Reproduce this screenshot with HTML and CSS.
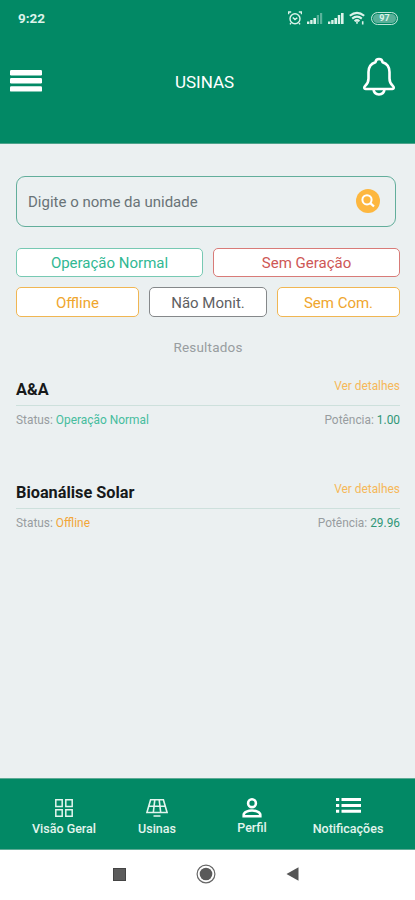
FILE: index.html
```html
<!DOCTYPE html>
<html lang="pt-BR">
<head>
<meta charset="utf-8">
<meta name="viewport" content="width=device-width, initial-scale=1">
<title>Usinas</title>
<link rel="stylesheet" href="styles.css">
</head>
<body>
<div class="app">
  <header class="header">
    <div class="statusbar">
      <span class="clock">9:22</span>
      <div class="indicators">
        <svg width="14" height="14" viewBox="0 0 14 14" fill="none" stroke="currentColor" stroke-width="1.4"><circle cx="7" cy="7.8" r="5"/><path d="M.6 3.2V1h2.6M13.4 3.2V1h-2.6M4.8 6.5 7 8.6l2.3-1.8M3 12l-1 1.4M11 12l1 1.4"/></svg>
        <svg class="sig1" width="16" height="12" viewBox="0 0 16 12" fill="currentColor"><path d="M0 9.5h2.4V12H0zM3.2 8h2.4v4H3.2zM6.4 6H9v6H6.400z"/><path opacity=".4" d="M9.8 3H12v9H9.800zM13 1h2.2v11H13z"/></svg>
        <svg class="sig2" width="16" height="12" viewBox="0 0 16 12" fill="currentColor"><path d="M0 9.5h2.4V12H0zM3.2 8h2.4v4H3.2zM6.4 6H9v6H6.400zM9.8 3h2.400v9H9.800zM13 1h2.6v11H13z"/></svg>
        <svg class="wifi" width="17" height="14" viewBox="0 0 17 14" fill="none" stroke="currentColor" stroke-width="2.100"><path d="M.8 4.8q7.2-6 14.4 0M3.2 7.6q4.8-4 9.6 0M5.6 10.2q2.4-2 4.8 0"/><path d="M8 10.2v2.6M13.7 10.2v3.3" stroke-width="1.6"/></svg>
        <span class="battery">97</span>
      </div>
    </div>
    <div class="toolbar">
      <svg class="menu" width="32" height="22" viewBox="0 0 32 22" fill="currentColor"><rect width="32" height="5.4" rx="1.2"/><rect y="8.1" width="32" height="5.4" rx="1.2"/><rect y="16.2" width="32" height="5.4" rx="1.2"/></svg>
      <h1>USINAS</h1>
      <svg class="bell" width="34" height="40" viewBox="0 0 34 40" fill="none" stroke="currentColor" stroke-width="2.6" stroke-linejoin="round"><path d="M17 2c-2.2 0-3.3 1.2-3.5 3.2C8.7 6.7 6.5 10.3 6.5 15v6.5c0 3.6-1 5.4-3.2 7.3-1.3 1.1-1.6 3.200.5 3.200h26.400c2.100 0 1.800-2.100.5-3.200-2.200-1.900-3.200-3.700-3.200-7.300V15c0-4.700-2.200-8.300-7-9.800C20.300 3.200 19.200 2 17 2z"/><path d="M11.500 32.200c.3 3.500 2.700 5.300 5.500 5.300s5.200-1.800 5.500-5.300"/></svg>
    </div>
  </header>

  <main class="content">
    <div class="search">
      <span class="placeholder">Digite o nome da unidade</span>
      <svg width="24" height="24" viewBox="0 0 24 24" fill="none"><circle cx="12" cy="12" r="12" fill="#fdb73f"/><circle cx="11" cy="10.800" r="4.600" stroke="#fff" stroke-width="2"/><path d="m14.300 14.100 3.700 3.400" stroke="#fff" stroke-width="2.300"/></svg>
    </div>
    <div class="filters two">
      <button class="chip green"><span>Operação Normal</span></button>
      <button class="chip red"><span>Sem Geração</span></button>
    </div>
    <div class="filters three">
      <button class="chip orange"><span>Offline</span></button>
      <button class="chip gray"><span>Não Monit.</span></button>
      <button class="chip orange"><span>Sem Com.</span></button>
    </div>
    <p class="results">Resultados</p>

    <article class="plant">
      <div class="row top"><h2>A&amp;A</h2><a>Ver detalhes</a></div>
      <div class="row info"><span>Status: <b class="ok">Operação Normal</b></span><span>Potência: <b class="power">1.00</b></span></div>
    </article>
    <article class="plant">
      <div class="row top"><h2>Bioanálise Solar</h2><a>Ver detalhes</a></div>
      <div class="row info"><span>Status: <b class="off">Offline</b></span><span>Potência: <b class="power">29.96</b></span></div>
    </article>
  </main>

  <nav class="tabs">
    <div class="tab">
      <svg width="18" height="18" viewBox="0 0 18 18" fill="none" stroke="currentColor" stroke-width="1.500"><path d="M.8.8h6.400v6.600H.8zM10.800.8h6.400v6.600h-6.400zM.8 10.700h6.400v6.500H.8zM10.800 10.700h6.400v6.500h-6.400z"/></svg>
      <span>Visão Geral</span>
    </div>
    <div class="tab">
      <svg width="22" height="18" viewBox="0 0 22 18" fill="none" stroke="currentColor" stroke-width="1.600"><path d="M4.600.8h12.800l3.700 12.700H.9zM2.900 7.300h16.200M8.800.8 7.300 13.500M13.200.8l1.500 12.700M7.500 17h7"/></svg>
      <span>Usinas</span>
    </div>
    <div class="tab profile">
      <svg width="20" height="20" viewBox="0 0 20 20" fill="none" stroke="currentColor" stroke-width="2.600"><circle cx="10" cy="5.200" r="3.900"/><path d="M1.700 18.300v-1.500c0-2.800 4.800-4.300 8.300-4.300s8.300 1.500 8.300 4.300v1.500z"/></svg>
      <span>Perfil</span>
    </div>
    <div class="tab notices">
      <svg width="25" height="15" viewBox="0 0 25 15" fill="currentColor"><path d="M0 0h3.200v3H0zM5.500 0H25v3H5.500zM0 5.900h3.200v3H0zM5.500 5.900H25v3H5.500zM0 11.800h3.200v3H0zM5.500 11.800H25v3H5.500z"/></svg>
      <span>Notificações</span>
    </div>
  </nav>
  <footer class="system">
    <svg width="13" height="13" viewBox="0 0 13 13"><rect x=".5" y=".5" width="12" height="12" fill="#5c5c5c" stroke="#444"/></svg>
    <svg width="20" height="20" viewBox="0 0 20 20"><circle cx="10" cy="10" r="8.900" fill="none" stroke="#666" stroke-width="1.200"/><circle cx="10" cy="10" r="6.300" fill="#5a5a5a"/></svg>
    <svg width="13" height="14" viewBox="0 0 13 14"><path d="M12.500.3v13.400L.5 7z" fill="#555"/></svg>
  </footer>
</div>
</body>
</html>
```
FILE: styles.css
```css
* { box-sizing: border-box; }
body {
  margin: 0;
  font-family: Roboto, "Liberation Sans", sans-serif;
  background: #ebf0f1;
}
h1, h2, p { margin: 0; }
svg { display: block; flex: none; }
.app { width: 415px; height: 900px; display: flex; flex-direction: column; overflow: hidden; }

.header { height: 144px; background: #028965; color: #fff; flex: none; border-bottom: 1px solid #4da38b; }
.statusbar { height: 36px; padding: 0 17px 0 18px; display: flex; align-items: center; justify-content: space-between; color: #dcf3ea; }
.clock { font-size: 13.5px; font-weight: 700; }
.indicators { display: flex; align-items: center; }
.sig1, .sig2, .wifi { margin-left: 5px; }
.battery {
  margin-left: 5px; width: 27px; height: 13px; border: 1.5px solid #bfe5d8; border-radius: 7px;
  background: #58af98; box-shadow: inset 0 0 0 1px #028965;
  font-size: 9px; line-height: 10px; font-weight: 700; text-align: center;
}
.toolbar { height: 90px; padding: 0 19px 0 10px; display: grid; grid-template-columns: 120px 1fr 120px; align-items: center; }
.toolbar h1 { font-size: 17px; font-weight: 400; text-align: center; padding-top: 1px; margin-right: -3px; }
.bell { justify-self: end; margin-top: -9px; }

.content { flex: 1; padding: 32px 15px 0 16px; }
.search {
  height: 51px; margin-right: 4px; padding: 0 15px 2px 11px;
  border: 1.5px solid #62ae9b; border-radius: 9px;
  display: flex; align-items: center; justify-content: space-between;
}
.placeholder { font-size: 15px; color: #697377; padding-top: 2px; }
.filters { display: grid; }
.two { grid-template-columns: 187px 187px; gap: 10px; margin-top: 21px; }
.three { grid-template-columns: 123px 118px 123px; gap: 10px; margin-top: 10px; }
.chip {
  height: 30px; padding: 2px 0 0; background: #fff; border: 1.5px solid; border-radius: 5px;
  font: 400 15px/1 Roboto, "Liberation Sans", sans-serif;
}
.two .chip { height: 29px; }
.green { color: #31b893; border-color: #77c9b3; }
.red { color: #ce5755; border-color: #d87b78; }
.orange { color: #efa62e; border-color: #f0b653; }
.gray { color: #5e6062; border-color: #85888a; }
.results { margin-top: 21px; height: 19px; line-height: 18px; font-size: 13.5px; letter-spacing: .2px; color: #989da0; text-align: center; }

.plant { height: 102.5px; padding-top: 20px; }
.row { display: flex; justify-content: space-between; }
.top { height: 29px; border-bottom: 1px solid #cde0dc; }
.top h2 { font-size: 16.3px; line-height: 25px; font-weight: 700; color: #17191a; }
.top a { font-size: 11.9px; line-height: 19px; color: #f6b859; }
.info { font-size: 11.9px; line-height: 28px; color: #989da0; }
.info b { font-weight: 400; }
.info .ok { color: #46bd9e; }
.info .off { color: #f2a63a; }
.info .power { color: #309777; }

.tabs {
  height: 72px; flex: none; background: #028965; color: #e2f5ee;
  border-top: 1px solid #5dab95; border-bottom: 1px solid #5dab95;
  display: grid; grid-template-columns: 110px 76px 114px 78px; align-items: start; padding-left: 9px;
}
.tab { display: grid; grid-template-rows: 42px 15px; justify-items: center; align-items: center; font-size: 12.5px; font-weight: 500; }
.tab svg { margin-top: 15px; }
.tab span { line-height: 14px; white-space: nowrap; }
.profile span { margin-top: -2px; }
.profile svg, .notices svg { color: #fff; }
.notices svg { margin-top: 11px; }
.system { height: 50px; flex: none; background: #fff; display: flex; justify-content: center; align-items: center; gap: 70px; padding: 0 3px 2px 0; }
```
